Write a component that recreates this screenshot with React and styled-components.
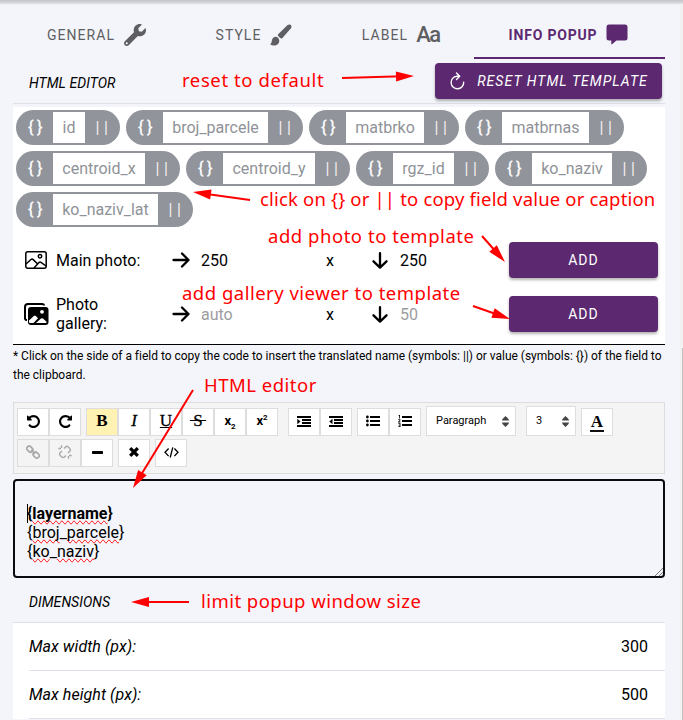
import React from "react";
import styled, { createGlobalStyle, css } from "styled-components";
import { FaWrench } from "react-icons/fa";

const Global = createGlobalStyle`
  * { box-sizing: border-box; }
  body { margin: 0; background: #f4f5fa; font-family: Roboto, "Liberation Sans", sans-serif; color: #000; overflow: hidden; }
`;
const Page = styled.div`
  position: relative; width: 683px; height: 720px; overflow: hidden;
  padding: 0 18px 0 13px; background: #f4f5fa;
`;
const TopShadow = styled.div`
  position: absolute; inset: 0 0 auto 0; height: 5px;
  background: linear-gradient(#c4c5c9, #d3d4d8 50%, #f4f5fa);
`;
const ScrollTrack = styled.div`
  position: absolute; top: 4px; right: 0; bottom: 0; width: 3px; background: #f1f1f2;
`;
const ScrollThumb = styled.div`
  position: absolute; top: 344px; right: 0; bottom: 0; width: 1px; background: #c1c1c1;
`;
const Tabs = styled.nav`display: grid; grid-template-columns: 167px 148px 146px 191px; height: 59px;`;
const Tab = styled.div`
  display: flex; align-items: center; justify-content: center; gap: 9px; padding-top: 12px;
  font-size: 14px; letter-spacing: 1.05px; color: #5f5f63; border-bottom: 2px solid transparent;
  ${p => p.$active && css`color: #5c2970; font-weight: 700; border-color: #5c2970; letter-spacing: .82px; padding-right: 2px;`}
  svg { display: block; }
`;
const Letters = styled.span`font-size: 22px; line-height: 22px; letter-spacing: -1.4px; font-weight: 500; width: 23px; padding-top: 1px; margin: 0 1px 0 -1px;`;
const SectionHead = styled.header`
  display: flex; align-items: center; justify-content: space-between;
  height: ${p => p.$height}px; padding: 0 3px 0 16px; border-bottom: 1px solid #e1dfe7;
  font-size: 14px; font-style: italic;
`;
const Heading = styled.span`padding-top: 4px; letter-spacing: .05px;`;
const Button = styled.button`
  display: flex; align-items: center; justify-content: center; gap: 11px;
  height: 36px; width: ${p => p.$width}px; padding: 0; border: 0; border-radius: 4px;
  background: #5c2970; color: #fff; font: ${p => (p.$italic ? "italic 14px" : "14px")} Roboto, sans-serif;
  letter-spacing: 1.05px; box-shadow: 0 2px 3px rgba(0,0,0,.3);
`;
const Panel = styled.section`background: #fff; margin-top: 3px; height: 238px; border-bottom: 1px solid #000;`;
const Chips = styled.div`display: flex; flex-wrap: wrap; gap: 6px; padding: 3px; height: 126px; align-content: flex-start;`;
const Chip = styled.div`
  display: flex; align-items: center; height: 35px; width: ${p => p.$width}px;
  border-radius: 18px; background: #91949b; color: #fff; font-size: 16px;
`;
const Braces = styled.span`width: 37px; flex: none; text-align: center; letter-spacing: 3.6px; padding-left: 5px; -webkit-text-stroke: .3px #fff;`;
const Bars = styled.span`width: 35px; flex: none; text-align: center; letter-spacing: 4.5px; padding-left: 3px; color: #f4eeee;`;
const Field = styled.span`
  flex: 1; height: 31px; line-height: 31px; text-align: center; background: #fff; color: #8f9298; white-space: nowrap;
`;
const PhotoRow = styled.div`
  display: grid; grid-template-columns: 43px 116px 29px 125px 46px 28px 109px 149px;
  align-items: center; height: 54px; font-size: 16px; line-height: 19px;
`;
const IconCell = styled.span`display: flex; padding-left: ${p => p.$left || 0}px; svg { display: block; }`;
const Value = styled.span`color: ${p => (p.$muted ? "#9c9ca0" : "#000")};`;
const Label = styled.span`width: ${p => p.$width || 116}px;`;
const Note = styled.p`margin: 2px 0 16px; font-size: 12px; line-height: 19px; height: 39px; letter-spacing: -.012px; white-space: nowrap;`;
const Toolbar = styled.div`height: 72px; padding: 3px 3px; background: #f4f4f4; border: 1px solid #ddd;`;
const ToolRow = styled.div`display: flex; align-items: flex-end; height: ${p => p.$height}px; gap: 5px;`;
const Group = styled.div`display: flex; margin-right: ${p => p.$after || 0}px;`;
const Tool = styled.span`
  display: flex; align-items: center; justify-content: center; padding-bottom: 2px;
  width: 32px; height: 28px; border: 1px solid #ddd; font-size: 13px;
  background: ${p => (p.$active ? "#fff2b3" : p.$disabled ? "#f4f4f4" : "#fff")};
  color: ${p => (p.$disabled ? "#a9a9a9" : "#000")};
`;
const Glyph = styled.span`
  font-family: "Liberation Serif", serif; font-size: 17px; line-height: 18px; white-space: pre;
  font-weight: ${p => (p.$bold ? 700 : 400)}; font-style: ${p => (p.$italic ? "italic" : "normal")};
  text-decoration: ${p => p.$line || "none"};
  -webkit-text-stroke: ${p => (p.$bold ? 0 : 0.3)}px #000;
  ${p => p.$swatch && css`border-bottom: 2px solid #111; line-height: 16px; padding: 0 1px; margin-top: 3px;`}
`;
const Script = styled.span`
  font-weight: 700; font-size: 13px; line-height: 14px;
  sub, sup { font-size: 8px; line-height: 0; }
`;
const Picker = styled.span`
  display: flex; align-items: center; justify-content: space-between; width: ${p => p.$width}px; height: 30px;
  margin-right: ${p => p.$after || 0}px; padding: 0 6px 2px 9px; border: 1px solid #ddd; background: #fff; font-size: 11px;
  svg { position: relative; top: 1px; }
`;
const Editor = styled.div`
  position: relative; margin-top: 5px; height: 99px; padding: 23px 12px 0; border: 2px solid #0a0a10; border-radius: 4px;
  font-size: 16px; line-height: 19px;
`;
const Line = styled.div`font-weight: ${p => (p.$bold ? 700 : 400)};`;
const Misspelled = styled.span`text-decoration-line: spelling-error;`;
const Caret = styled.i`position: absolute; left: 12px; top: 23px; width: 1px; height: 19px; background: #000;`;
const Grip = styled.svg`position: absolute; right: 0; bottom: 0;`;
const SettingList = styled.div`background: #fff; padding-left: 16px;`;
const Setting = styled.div`
  display: flex; align-items: center; justify-content: space-between; height: 48px; padding-right: 17px;
  border-bottom: 1px solid #e1dfe7; font-size: 16px;
  em { letter-spacing: .06px; }
`;
const Callout = styled.span`
  position: absolute; left: ${p => p.$x}px; top: ${p => p.$y}px; height: 26px;
  font: 400 18.5px/26px "Noto Sans", "Open Sans", sans-serif; letter-spacing: ${p => p.$track}px; color: #f00; white-space: nowrap;
`;
const Arrows = styled.svg`position: absolute; inset: 0; pointer-events: none;`;

const Rotate = ({ flip }) => (
  <svg width="13" height="13" viewBox="0 128 1536 1536" fill="currentColor">
    <path transform={flip ? "translate(1536 0) scale(-1 1)" : undefined} d="M1536 896q0 156-61 298t-164 245-245 164-298 61q-172 0-327-72.5t-264-204.5q-7-10-6.5-22.5t8.5-20.5l137-138q10-9 25-9 16 2 23 12 73 95 179 147t225 52q104 0 198.5-40.5t163.5-109.5 109.5-163.5 40.5-198.5-40.5-198.5-109.5-163.5-163.5-109.5-198.5-40.5q-98 0-188 35.5t-160 101.5l137 138q31 30 14 69-17 40-59 40h-448q-26 0-45-19t-19-45v-448q0-42 40-59 39-17 69 14l130 129q107-101 244.5-156.5t284.5-55.5q156 0 298 61t245 164 164 245 61 298z" />
  </svg>
);
const Brush = () => (
  <svg width="22" height="22" viewBox="0 0 22 22" fill="currentColor">
    <path d="M17.6 1Q19 0 20.6 .8 22 2.2 21.2 4L12.2 14.2Q11.2 15 10 13.8L8.2 12Q7.4 11 8.4 10ZM6.2 12.8Q8.8 13.4 9.2 16 9.6 20.2 6 21.3 2.8 22.2 0 20.2 1.6 19.8 1.7 17.6 2 12.8 6.2 12.8Z" />
  </svg>
);
const Speech = () => (
  <svg width="22" height="21" viewBox="0 0 22 21" fill="currentColor">
    <path d="M3 .5H19Q21.5 .5 21.5 3V14Q21.5 16.5 19 16.5H10.5L6 20.3Q5.3 20.6 5.3 19.8V16.5H3Q.5 16.5 .5 14V3Q.5 .5 3 .5Z" />
  </svg>
);
const Shift = ({ out }) => (
  <svg width="14" height="11" viewBox="0 0 14 11" fill="currentColor">
    <path d="M0 0H14V2H0ZM5 3H14V5H5ZM5 6H14V8H5ZM0 9H14V11H0Z" />
    <path d={out ? "M3.5 2.8V8.2L.3 5.5Z" : "M.3 2.8V8.2L3.5 5.5Z"} />
  </svg>
);
const List = ({ numbered }) => (
  <svg width="14" height="12" viewBox="0 0 14 12" fill="currentColor">
    <path d="M4 1H14V3H4ZM4 5H14V7H4ZM4 9H14V11H4Z" />
    {numbered
      ? <path d="M.8 0H2V3.5H1.2V1H.6ZM.3 4.2H2.4V5.6L1.3 6.8H2.5V7.5H.2V6.6L1.6 5.2V5H.3ZM.3 8.3H2.5V12H.3V11.2H1.6V10.4H.8V9.8H1.6V9.1H.3Z" />
      : <><circle cx="1.4" cy="2" r="1.4" /><circle cx="1.4" cy="6" r="1.4" /><circle cx="1.4" cy="10" r="1.4" /></>}
  </svg>
);
const Chain = ({ broken }) => (
  <svg width="14" height="14" viewBox="0 0 14 14" fill="none" stroke="currentColor" strokeWidth="1.7">
    {broken
      ? <path d="M6 3.5 7.8 1.8Q9 .8 10.2 2L11.8 3.6Q13 5 11.8 6.2L10 8M8 10.5 6.2 12.2Q5 13 3.8 12L2.2 10.4Q1 9 2.2 7.8L4 6M3.5 .3V3M.3 3.5H3M10.5 11V13.7M11 10.5H13.7" strokeWidth="1.4" />
      : <><rect x="-2.6" y="-2" width="6.4" height="4.6" rx="2" transform="translate(3.6 3.5) rotate(45)" /><rect x="-3.6" y="-2.4" width="6.4" height="4.6" rx="2" transform="translate(10.4 10.4) rotate(45)" /><path d="M5 5 9 9" /></>}
  </svg>
);
const Dash = () => <svg width="11" height="3" viewBox="0 0 11 3"><rect width="11" height="3" rx=".7" /></svg>;
const Code = () => <svg width="15" height="11" viewBox="0 0 15 11" fill="none" stroke="currentColor" strokeWidth="1.3"><path d="M4.6 1.5 1 5.3 4.6 9.1M10.4 1.5 14 5.3 10.4 9.1M8.8 .3 6.2 10.5" /></svg>;
const Cross = () => <svg width="10" height="10" viewBox="0 0 10 10" stroke="currentColor" strokeWidth="3.3"><path d="M1.2 1.2 8.8 8.8M8.8 1.2 1.2 8.8" /></svg>;
const UpDown = () => <svg width="7" height="11" viewBox="0 0 7 11" fill="#444"><path d="M0 4.5Q0 2.8 2 1.5L3.5 0 5 1.5Q7 2.8 7 4.5ZM0 6.5Q0 8.2 2 9.5L3.5 11 5 9.5Q7 8.2 7 6.5Z" /></svg>;
const Reload = () => (
  <svg width="17" height="18" viewBox="0 0 17 18" fill="none" stroke="#fff" strokeWidth="1.4" strokeLinecap="round" strokeLinejoin="round">
    <path d="M10 4.2H7.8A6.3 6.3 0 1 0 14.7 10.2M7.5 1 10.7 4.2 7.5 7.4" />
  </svg>
);
const Right = () => <svg width="18" height="16" viewBox="0 0 18 16" fill="none" stroke="#000" strokeWidth="2.3" strokeLinecap="round" strokeLinejoin="round"><path d="M1.5 8H16M10 1.5 16.5 8 10 14.5" /></svg>;
const Down = () => <svg width="16" height="17" viewBox="0 0 16 17" fill="none" stroke="#000" strokeWidth="2.3" strokeLinecap="round" strokeLinejoin="round"><path d="M8 1.2V15M1.5 9.3 8 15.6 14.5 9.3" /></svg>;
const Photo = () => (
  <svg width="22" height="18" viewBox="0 0 22 18" fill="none" stroke="#000" strokeWidth="1.5" strokeLinejoin="round">
    <rect x=".8" y=".8" width="20.4" height="16.4" rx="2" />
    <circle cx="15" cy="5.2" r="1.7" />
    <path d="M1 13 6.2 8.3Q7.2 7.6 8.2 8.6L13.2 13.5M9 17 14.2 11.3Q15 10.7 16 11.3L21 15" />
  </svg>
);
const Gallery = () => (
  <svg width="25" height="23" viewBox="0 0 25 23">
    <path d="M3 17H2.5Q1 17 1 15V4Q1 1 4 1H18Q20 1 20 2.5" fill="none" stroke="#000" strokeWidth="2" />
    <rect x="4" y="4" width="20.5" height="18" rx="3" fill="#000" />
    <circle cx="18" cy="8.8" r="1.9" fill="#fff" />
    <path d="M5 17.5 9.8 12.9Q10.8 12 11.8 13L14 15.3 9.5 20H6Q5 20 5 19ZM12 20 17 15.5Q18 14.8 19 15.6L22.8 19 22 20Z" fill="#fff" />
  </svg>
);

const fields = [["id", 104], ["broj_parcele", 177], ["matbrko", 150], ["matbrnas", 159], ["centroid_x", 164], ["centroid_y", 164], ["rgz_id", 133], ["ko_naziv", 152], ["ko_naziv_lat", 177]];
const callouts = [
  [182, 67, 0.6, "reset to default"], [260, 186, 0.17, "click on {} or || to copy field value or caption"],
  [268, 223, 0.53, "add photo to template"], [182, 280, 0.49, "add gallery viewer to template"],
  [204, 372, 0.5, "HTML editor"], [201, 588, 0.46, "limit popup window size"],
];
const arrows = [[342, 78, 414, 76], [250, 200, 193, 192], [482, 236, 505, 262], [473, 306, 510, 319], [193, 390, 133, 488], [189, 602, 131, 602]];

function Arrow({ points: [x1, y1, x2, y2] }) {
  const length = Math.hypot(x2 - x1, y2 - y1);
  const angle = (Math.atan2(y2 - y1, x2 - x1) * 180) / Math.PI;
  return (
    <g transform={`translate(${x1} ${y1}) rotate(${angle})`}>
      <path d={`M0 0H${length - 12}`} stroke="#f00" strokeWidth="2" />
      <path d={`M${length} 0 l-18 -5 v10z`} fill="#f00" />
    </g>
  );
}

function PhotoSetting({ icon, iconLeft, label, labelWidth, w, h, muted }) {
  return (
    <PhotoRow>
      <IconCell $left={iconLeft}>{icon}</IconCell>
      <Label $width={labelWidth}>{label}</Label>
      <IconCell><Right /></IconCell>
      <Value $muted={muted}>{w}</Value>
      <Value>x</Value>
      <IconCell><Down /></IconCell>
      <Value $muted={muted}>{h}</Value>
      <Button $width={149}>ADD</Button>
    </PhotoRow>
  );
}

export default function App() {
  return (
    <>
      <Global />
      <Page>
        <TopShadow />
        <ScrollTrack><ScrollThumb /></ScrollTrack>
        <Tabs>
          <Tab>GENERAL <FaWrench size={22} /></Tab>
          <Tab>STYLE <Brush /></Tab>
          <Tab>LABEL <Letters>Aa</Letters></Tab>
          <Tab $active>INFO POPUP <Speech /></Tab>
        </Tabs>
        <SectionHead $height={45}>
          <Heading>HTML EDITOR</Heading>
          <Button $width={227} $italic><Reload />RESET HTML TEMPLATE</Button>
        </SectionHead>
        <Panel>
          <Chips>
            {fields.map(([name, width]) => (
              <Chip key={name} $width={width}><Braces>{"{}"}</Braces><Field>{name}</Field><Bars>||</Bars></Chip>
            ))}
          </Chips>
          <PhotoSetting icon={<Photo />} iconLeft={12} label="Main photo:" w="250" h="250" />
          <PhotoSetting icon={<Gallery />} iconLeft={11} label="Photo gallery:" labelWidth={70} w="auto" h="50" muted />
        </Panel>
        <Note>
          * Click on the side of a field to copy the code to insert the translated name (symbols: ||) or value (symbols: {"{}"}) of the field to
          <br />the clipboard.
        </Note>
        <Toolbar>
          <ToolRow $height={30}>
            <Group><Tool><Rotate /></Tool><Tool><Rotate flip /></Tool></Group>
            <Group $after={5}>
              <Tool $active><Glyph $bold>B</Glyph></Tool>
              <Tool><Glyph $italic>I</Glyph></Tool>
              <Tool><Glyph $line="underline">U</Glyph></Tool>
              <Tool><Glyph $line="line-through">{"\u2009S\u2009"}</Glyph></Tool>
              <Tool><Script>x<sub>2</sub></Script></Tool>
              <Tool><Script>x<sup>2</sup></Script></Tool>
            </Group>
            <Group><Tool><Shift /></Tool><Tool><Shift out /></Tool></Group>
            <Group><Tool><List /></Tool><Tool><List numbered /></Tool></Group>
            <Picker $width={90} $after={5}>Paragraph<UpDown /></Picker>
            <Picker $width={50}>3<UpDown /></Picker>
            <Tool><Glyph $bold $swatch>A</Glyph></Tool>
          </ToolRow>
          <ToolRow $height={31}>
            <Group><Tool $disabled><Chain /></Tool><Tool $disabled><Chain broken /></Tool><Tool><Dash /></Tool></Group>
            <Group><Tool><Cross /></Tool></Group>
            <Group><Tool><Code /></Tool></Group>
          </ToolRow>
        </Toolbar>
        <Editor>
          <Caret />
          <Line $bold>{"{"}<Misspelled>layername</Misspelled>{"}"}</Line>
          <Line>{"{"}<Misspelled>broj</Misspelled>_<Misspelled>parcele</Misspelled>{"}"}</Line>
          <Line>{"{"}<Misspelled>ko</Misspelled>_<Misspelled>naziv</Misspelled>{"}"}</Line>
          <Grip width="9" height="9" viewBox="0 0 9 9" stroke="#777"><path d="M1 9 9 1M5 9 9 5" /></Grip>
        </Editor>
        <SectionHead $height={45}><Heading>DIMENSIONS</Heading></SectionHead>
        <SettingList>
          <Setting><em>Max width (px):</em><span>300</span></Setting>
          <Setting><em>Max height (px):</em><span>500</span></Setting>
        </SettingList>
        <Arrows width="683" height="720">{arrows.map((points, i) => <Arrow key={i} points={points} />)}</Arrows>
        {callouts.map(([x, y, track, text]) => <Callout key={text} $x={x} $y={y} $track={track}>{text}</Callout>)}
      </Page>
    </>
  );
}
